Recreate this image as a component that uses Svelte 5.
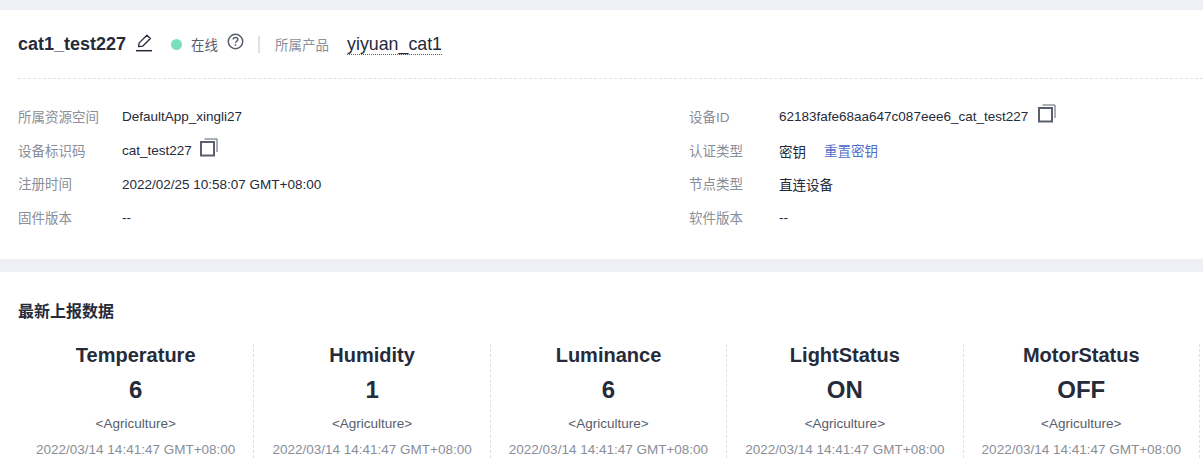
<script>
  const leftRows = [
    { label: '所属资源空间', value: 'DefaultApp_xingli27' },
    { label: '设备标识码', value: 'cat_test227', copy: true },
    { label: '注册时间', value: '2022/02/25 10:58:07 GMT+08:00' },
    { label: '固件版本', value: '--' }
  ];
  const rightRows = [
    { label: '设备ID', value: '62183fafe68aa647c087eee6_cat_test227', copy: true },
    { label: '认证类型', value: '密钥', link: '重置密钥' },
    { label: '节点类型', value: '直连设备' },
    { label: '软件版本', value: '--' }
  ];
  const stats = [
    { name: 'Temperature', value: '6' },
    { name: 'Humidity', value: '1' },
    { name: 'Luminance', value: '6' },
    { name: 'LightStatus', value: 'ON' },
    { name: 'MotorStatus', value: 'OFF' }
  ];
</script>

{#snippet rows(list)}
  <div class="col">
    {#each list as row}
      <div class="row">
        <span class="label">{row.label}</span>
        <span class="value">{row.value}</span>
        {#if row.copy}
          <svg class="copy" width="18" height="19" viewBox="0 0 18 19" fill="none">
            <rect x="1" y="4" width="13" height="13.5" stroke="#5a5e6e" stroke-width="2" />
            <path d="M4.5 1h12.5v13" stroke="#5a5e6e" stroke-width="1" />
          </svg>
        {/if}
        {#if row.link}
          <a class="link" href="#reset">{row.link}</a>
        {/if}
      </div>
    {/each}
  </div>
{/snippet}

<div class="page">
  <section class="info">
    <header class="head">
      <h1>cat1_test227</h1>
      <svg class="edit" width="18" height="18" viewBox="0 0 18 18" fill="none" stroke="#252b3a">
        <path d="M3.5 12.6l.7-3.7L11.9 1.2l3.5 3.3-7.8 7.7-4.1.4z" stroke-width="1.3" stroke-linejoin="round" />
        <path d="M1 16.7h16" stroke-width="1.5" />
      </svg>
      <i class="dot"></i>
      <span class="status">在线</span>
      <svg class="help" width="17" height="17" viewBox="0 0 17 17" fill="none">
        <circle cx="8.5" cy="8.5" r="7.2" stroke="#575d6c" stroke-width="1.5" />
        <path d="M6.2 6.6c0-1.4 1-2.2 2.3-2.2s2.3.8 2.3 2c0 1.9-2.3 1.8-2.3 3.6" stroke="#575d6c" stroke-width="1.5" />
        <rect x="7.7" y="11.2" width="1.6" height="1.6" fill="#575d6c" />
      </svg>
      <i class="sep"></i>
      <span class="product-label">所属产品</span>
      <a class="product" href="#product">yiyuan_cat1</a>
    </header>
    <div class="details">
      {@render rows(leftRows)}
      {@render rows(rightRows)}
    </div>
  </section>

  <section class="latest">
    <h2>最新上报数据</h2>
    <div class="stats">
      {#each stats as s}
        <div class="stat">
          <div class="name">{s.name}</div>
          <div class="num">{s.value}</div>
          <div class="svc">&lt;Agriculture&gt;</div>
          <div class="time">2022/03/14 14:41:47 GMT+08:00</div>
        </div>
      {/each}
    </div>
  </section>
</div>

<style>
  :global(body) {
    margin: 0;
    background: #fff;
    font-family: "Liberation Sans", "Noto Sans CJK SC", sans-serif;
  }

  .page {
    height: 472px;
    overflow: hidden;
    background: #eef0f5;
    padding-top: 10px;
    box-sizing: border-box;
  }

  .info {
    background: #fff;
    height: 249px;
    padding: 0 0 0 18px;
    box-sizing: border-box;
  }

  .head {
    display: flex;
    align-items: center;
    height: 68px;
    border-bottom: 1px dashed #dfe1e6;
  }

  h1 {
    margin: 0;
    font-size: 18px;
    font-weight: 700;
    color: #252b3a;
  }

  .edit {
    margin: -3px 0 0 9px;
  }

  .dot {
    width: 11px;
    height: 11px;
    border-radius: 50%;
    background: #7adfbf;
    margin-left: 18px;
  }

  .status {
    font-size: 13.5px;
    color: #575d6c;
    margin: 0 0 0 9px;
  }

  .help {
    margin: -6px 0 0 9px;
  }

  .sep {
    width: 2px;
    height: 17px;
    background: #dfe1e6;
    margin-left: 14px;
  }

  .product-label {
    font-size: 13.5px;
    color: #8a8e99;
    margin-left: 15px;
  }

  .product {
    font-size: 17.8px;
    color: #252b3a;
    text-decoration: none;
    border-bottom: 1px dotted #3a5fd9;
    margin-left: 18px;
    line-height: 20px;
  }

  .details {
    display: grid;
    grid-template-columns: 671px 1fr;
    padding-top: 21px;
  }

  .row {
    display: flex;
    align-items: center;
    height: 33.7px;
    font-size: 13.5px;
    color: #252b3a;
  }

  .label {
    color: #8a8e99;
    width: 104px;
    margin-top: -2px;
  }

  .col:last-child .label {
    width: 90px;
  }

  .copy {
    margin: -7px 0 0 8px;
  }

  .col:last-child .copy {
    margin-left: 10px;
  }

  .link {
    color: #526ecc;
    text-decoration: none;
    margin-left: 18px;
    margin-top: -2px;
  }

  .latest {
    background: #fff;
    margin-top: 13px;
    height: 200px;
    padding: 29px 0 0 18px;
    box-sizing: border-box;
  }

  h2 {
    margin: 0;
    font-size: 16px;
    font-weight: 700;
    line-height: 22px;
    color: #252b3a;
  }

  .stats {
    display: flex;
    margin-top: 21px;
  }

  .stat {
    flex: 0 0 236.4px;
    box-sizing: border-box;
    height: 114px;
    border-right: 1px dashed #dfe1e6;
    text-align: center;
  }

  .name {
    font-size: 20px;
    font-weight: 700;
    line-height: 22px;
    color: #252b3a;
  }

  .num {
    font-size: 24px;
    font-weight: 700;
    line-height: 28px;
    margin-top: 10px;
    color: #252b3a;
  }

  .svc {
    font-size: 13.5px;
    line-height: 16px;
    margin-top: 12px;
    color: #575d6c;
  }

  .time {
    font-size: 13.5px;
    line-height: 16px;
    margin-top: 10px;
    color: #8a8e99;
  }
</style>
